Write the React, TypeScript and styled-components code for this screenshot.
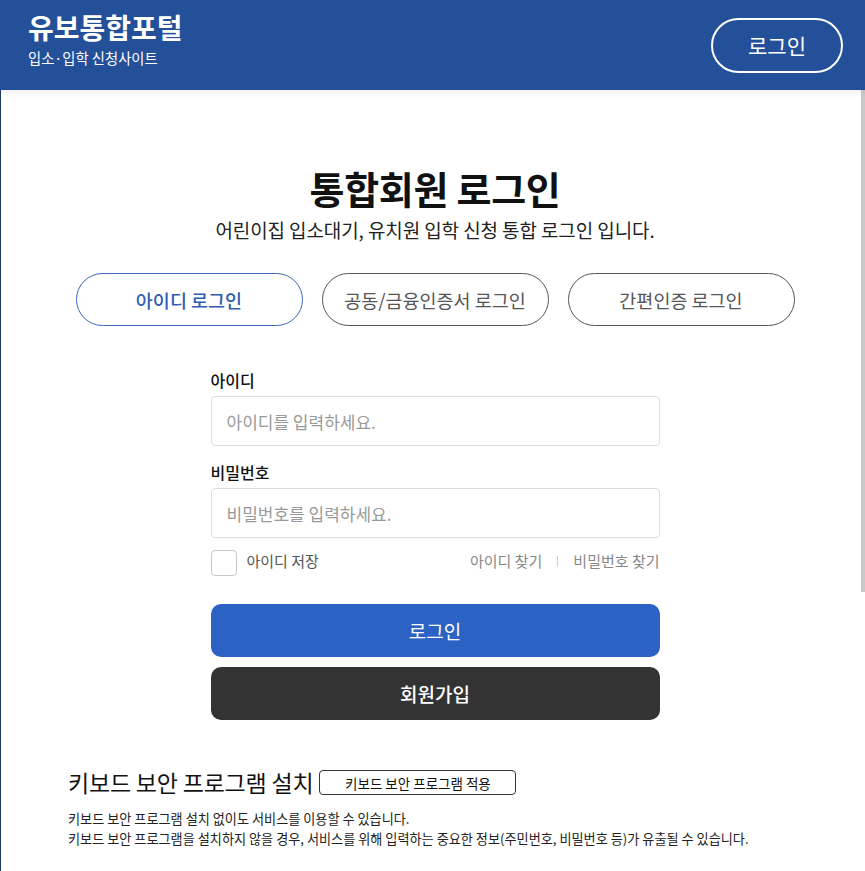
import React from 'react';
import styled, { createGlobalStyle } from 'styled-components';

const GlobalStyle = createGlobalStyle`
  html, body, #root {
    margin: 0;
    height: 100%;
  }
  body {
    font-family: 'Noto Sans CJK KR', 'Noto Sans', sans-serif;
    color: #111;
    background: #fff;
  }
  * {
    box-sizing: border-box;
  }
`;

// Login method tabs shown above the form.
const tabs = ['아이디 로그인', '공동/금융인증서 로그인', '간편인증 로그인'];

/**
 * App renders the integrated member login page.
 * @returns React component.
 */
export default function App() {
  const [active, setActive] = React.useState(0);

  return (
    <Page>
      <GlobalStyle />
      <Header>
        <Brand>
          <BrandTitle>유보통합포털</BrandTitle>
          <BrandSub>입소·입학 신청사이트</BrandSub>
        </Brand>
        <HeaderLogin type="button">로그인</HeaderLogin>
      </Header>
      <Main>
        <Content>
          <Title>통합회원 로그인</Title>
          <Subtitle>어린이집 입소대기, 유치원 입학 신청 통합 로그인 입니다.</Subtitle>

          <TabRow>
            {tabs.map((tab, i) => (
              <Tab key={tab} type="button" $active={i === active} onClick={() => setActive(i)}>
                {tab}
              </Tab>
            ))}
          </TabRow>

          <Form onSubmit={(e) => e.preventDefault()}>
            <Field>
              <Label htmlFor="userId">아이디</Label>
              <Input id="userId" placeholder="아이디를 입력하세요." />
            </Field>
            <Field>
              <Label htmlFor="userPw">비밀번호</Label>
              <Input id="userPw" type="password" placeholder="비밀번호를 입력하세요." />
            </Field>

            <OptionRow>
              <SaveId>
                <Checkbox type="checkbox" />
                <OptionText>아이디 저장</OptionText>
              </SaveId>
              <FindLinks>
                <FindLink href="#">아이디 찾기</FindLink>
                <Divider />
                <FindLink href="#">비밀번호 찾기</FindLink>
              </FindLinks>
            </OptionRow>

            <SubmitButton type="submit" $variant="primary">
              로그인
            </SubmitButton>
            <SubmitButton type="button" $variant="dark">
              회원가입
            </SubmitButton>
          </Form>

          <Keyboard>
            <KeyboardHead>
              <KeyboardTitle>키보드 보안 프로그램 설치</KeyboardTitle>
              <KeyboardButton type="button">키보드 보안 프로그램 적용</KeyboardButton>
            </KeyboardHead>
            <KeyboardText>
              키보드 보안 프로그램 설치 없이도 서비스를 이용할 수 있습니다.
              <br />
              키보드 보안 프로그램을 설치하지 않을 경우, 서비스를 위해 입력하는 중요한 정보(주민번호,
              비밀번호 등)가 유출될 수 있습니다.
            </KeyboardText>
          </Keyboard>
        </Content>
      </Main>
      {/* thin scroll thumb of the page body, drawn since the capture hides scrollbars */}
      <ScrollThumb />
    </Page>
  );
}

const Page = styled.div`
  position: relative;
  display: flex;
  flex-direction: column;
  height: 100vh;
  overflow: hidden;
`;

const Header = styled.header`
  position: relative;
  z-index: 1;
  flex-shrink: 0;
  display: flex;
  align-items: center;
  justify-content: space-between;
  height: 90px;
  padding: 0 22px 0 28px;
  background: #24509a;
  box-shadow: 0 2px 8px rgba(0, 0, 0, 0.08);
`;

const Brand = styled.div`
  display: flex;
  flex-direction: column;
  gap: 4px;
  margin-bottom: 11px;
  color: #fff;
`;

const BrandTitle = styled.h1`
  margin: 0;
  font-size: 28px;
  line-height: 33px;
  font-weight: 700;
`;

const BrandSub = styled.p`
  margin: 0;
  font-size: 14.3px;
  line-height: 20px;
`;

const HeaderLogin = styled.button`
  width: 132px;
  height: 55px;
  border: 2px solid #fff;
  border-radius: 28px;
  background: transparent;
  color: #fff;
  font-family: inherit;
  font-size: 21px;
  cursor: pointer;
`;

const Main = styled.main`
  flex: 1;
  overflow-y: auto;
  border-left: 1px solid #1d3d5c;
  padding: 0 4px 0 8px;
`;

const ScrollThumb = styled.div`
  position: absolute;
  top: 90px;
  right: 0;
  width: 4px;
  height: 502px;
  background: #c8c8c8;
`;

const Content = styled.div`
  max-width: 734px;
  margin: 0 auto;
  padding: 75px 0 40px;
`;

const Title = styled.h2`
  margin: 0;
  text-align: center;
  font-size: 38px;
  line-height: 46px;
  font-weight: 700;
  letter-spacing: -0.3px;
`;

const Subtitle = styled.p`
  margin: 6px 0 0;
  text-align: center;
  font-size: 19px;
  line-height: 26px;
  letter-spacing: -0.1px;
  color: #222;
`;

const TabRow = styled.div`
  display: flex;
  justify-content: center;
  gap: 19px;
  margin-top: 30px;
`;

const Tab = styled.button<{ $active: boolean }>`
  width: 227px;
  height: 53px;
  border: 1px solid ${(p) => (p.$active ? '#3e66b9' : '#555')};
  border-radius: 27px;
  background: #fff;
  color: ${(p) => (p.$active ? '#2f5db2' : '#555')};
  font-family: inherit;
  font-size: 18.5px;
  font-weight: ${(p) => (p.$active ? 500 : 400)};
  cursor: pointer;
`;

const Form = styled.form`
  display: flex;
  flex-direction: column;
  width: 449px;
  margin: 42px auto 0;
`;

const Field = styled.div`
  display: flex;
  flex-direction: column;
  gap: 4px;
  margin-bottom: 14px;
`;

const Label = styled.label`
  font-size: 16px;
  line-height: 24px;
  font-weight: 500;
  color: #111;
`;

const Input = styled.input`
  height: 50px;
  padding: 0 15px;
  border: 1px solid #dcdcdc;
  border-radius: 4px;
  font-family: inherit;
  font-size: 17px;
  color: #222;
  outline: none;

  &::placeholder {
    color: #999;
  }
`;

const OptionRow = styled.div`
  display: flex;
  align-items: center;
  justify-content: space-between;
  margin-top: -2px;
  font-size: 15px;
  line-height: 20px;
`;

const SaveId = styled.label`
  display: flex;
  align-items: center;
  gap: 10px;
  color: #555;
`;

const OptionText = styled.span`
  padding-bottom: 4px;
`;

const Checkbox = styled.input`
  appearance: none;
  width: 26px;
  height: 26px;
  margin: 0;
  border: 1px solid #c8c8c8;
  border-radius: 4px;
  background: #fff;
`;

const FindLinks = styled.div`
  display: flex;
  align-items: center;
  padding-bottom: 4px;
`;

const FindLink = styled.a`
  color: #888;
  text-decoration: none;
`;

const Divider = styled.span`
  width: 1px;
  height: 11px;
  margin: 0 15px;
  background: #ccc;
`;

const SubmitButton = styled.button<{ $variant: 'primary' | 'dark' }>`
  height: 53px;
  margin-top: ${(p) => (p.$variant === 'primary' ? '28px' : '10px')};
  border: none;
  border-radius: 10px;
  background: ${(p) => (p.$variant === 'primary' ? '#2c62c4' : '#333')};
  color: #fff;
  font-family: inherit;
  font-size: 19px;
  font-weight: ${(p) => (p.$variant === 'primary' ? 400 : 500)};
  cursor: pointer;
`;

const Keyboard = styled.section`
  margin-top: 48px;
`;

const KeyboardHead = styled.div`
  display: flex;
  align-items: center;
  gap: 6px;
`;

const KeyboardTitle = styled.h3`
  margin: 0;
  font-size: 23px;
  line-height: 29px;
  font-weight: 400;
  letter-spacing: -0.2px;
  color: #111;
`;

const KeyboardButton = styled.button`
  width: 197px;
  height: 25px;
  padding: 0;
  border: 1px solid #333;
  border-radius: 4px;
  background: #fff;
  color: #111;
  font-family: inherit;
  font-size: 13.5px;
  cursor: pointer;
`;

const KeyboardText = styled.p`
  margin: 12px 0 0;
  font-size: 13.15px;
  line-height: 20px;
  color: #222;
`;
